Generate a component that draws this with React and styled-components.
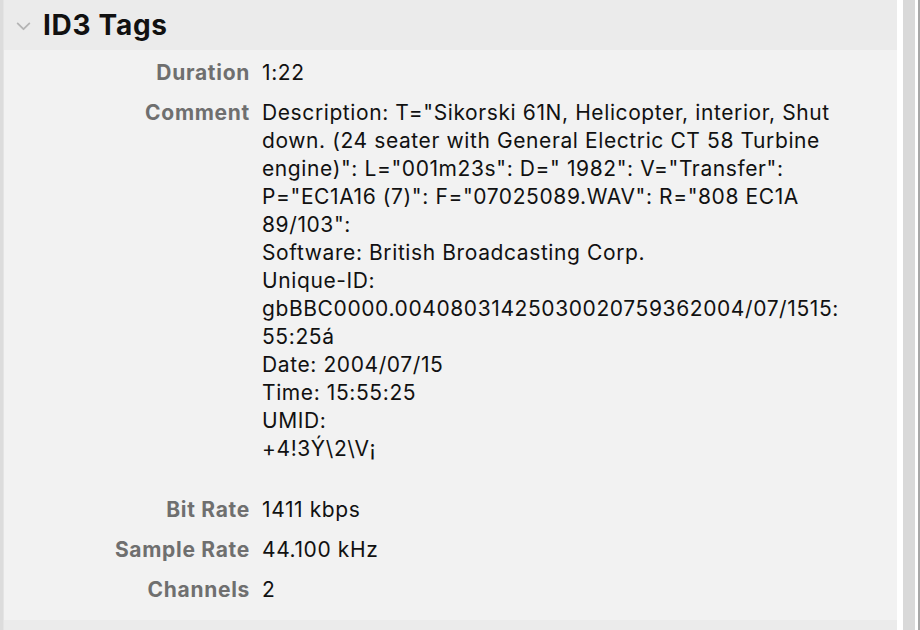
import styled, { createGlobalStyle } from "styled-components";

const Global = createGlobalStyle`
  html, body {
    margin: 0;
    padding: 0;
    background: #fff;
  }
  body {
    width: 920px;
    height: 630px;
    overflow: hidden;
    font-family: Inter, "Liberation Sans", sans-serif;
    -webkit-font-smoothing: antialiased;
  }
`;

const rows = [
  { label: "Duration", value: ["1:22"] },
  {
    label: "Comment",
    value: [
      'Description: T="Sikorski 61N, Helicopter, interior, Shut',
      "down. (24 seater with General Electric CT 58 Turbine",
      'engine)": L="001m23s": D=" 1982": V="Transfer":',
      'P="EC1A16 (7)": F="07025089.WAV": R="808 EC1A',
      '89/103":',
      "Software: British Broadcasting Corp.",
      "Unique-ID:",
      "gbBBC0000.00408031425030020759362004/07/1515:",
      "55:25á",
      "Date: 2004/07/15",
      "Time: 15:55:25",
      "UMID:",
      "+4!3Ý\\2\\V¡",
    ],
    trailing: true,
  },
  { label: "Bit Rate", value: ["1411 kbps"] },
  { label: "Sample Rate", value: ["44.100 kHz"] },
  { label: "Channels", value: ["2"] },
];

const App = () => {
  return (
    <>
      <Global />
      <Window>
        <LeftEdge />
        <Panel>
          <Header>
            <Chevron viewBox="0 0 16 10">
              <path d="M1.5 1.5 L8 8 L14.5 1.5" />
            </Chevron>
            <Title>ID3 Tags</Title>
          </Header>
          <Body>
            <InfoGrid>
              {rows.map((row) => (
                <Row key={row.label}>
                  <Label>{row.label}</Label>
                  <Value $trailing={row.trailing}>
                    {row.value.map((line, i) => (
                      <Line key={i}>{line}</Line>
                    ))}
                  </Value>
                </Row>
              ))}
            </InfoGrid>
          </Body>
          <NextSection />
        </Panel>
        <Gutter />
        <ScrollTrack />
        <Gutter $narrow />
        <RightEdge />
      </Window>
    </>
  );
};

export default App;

const Window = styled.div`
  display: flex;
  width: 920px;
  height: 630px;
`;

const LeftEdge = styled.div`
  width: 3px;
  background: #dcdcdc;
  border-right: 1px solid #e4e4e4;
`;

const Panel = styled.div`
  flex: 1;
  display: flex;
  flex-direction: column;
`;

const Header = styled.div`
  height: 50px;
  background: #ebebeb;
  display: flex;
  align-items: center;
  padding-left: 12px;
  box-sizing: border-box;
`;

const Chevron = styled.svg`
  width: 15px;
  height: 9px;
  margin-top: 2px;
  fill: none;
  stroke: #b4b4b4;
  stroke-width: 2;
  stroke-linecap: round;
  stroke-linejoin: round;
`;

const Title = styled.h2`
  margin: 0 0 0 12px;
  font-size: 28px;
  font-weight: 700;
  color: #111;
  letter-spacing: 0.7px;
`;

const Body = styled.div`
  flex: 1;
  background: #f2f2f2;
  padding-top: 9px;
`;

const InfoGrid = styled.div`
  display: flex;
  flex-direction: column;
  gap: 12px;
`;

const Row = styled.div`
  display: grid;
  grid-template-columns: 246px 1fr;
  column-gap: 12px;
`;

const Label = styled.div`
  text-align: right;
  font-size: 21px;
  line-height: 28px;
  font-weight: 700;
  color: #6f6f6f;
  letter-spacing: 0.7px;
`;

const Value = styled.div`
  font-size: 21px;
  line-height: 28px;
  color: #111;
  letter-spacing: 0.6px;
  padding-bottom: ${(p) => (p.$trailing ? "21px" : "0")};
`;

const Line = styled.div`
  white-space: nowrap;
`;

const NextSection = styled.div`
  height: 10px;
  background: #ebebeb;
`;

const Gutter = styled.div`
  width: ${(p) => (p.$narrow ? "3px" : "6px")};
  background: #fff;
`;

const ScrollTrack = styled.div`
  width: 12px;
  background: #d9d9d9;
`;

const RightEdge = styled.div`
  width: 2px;
  background: #a8a8a8;
`;
